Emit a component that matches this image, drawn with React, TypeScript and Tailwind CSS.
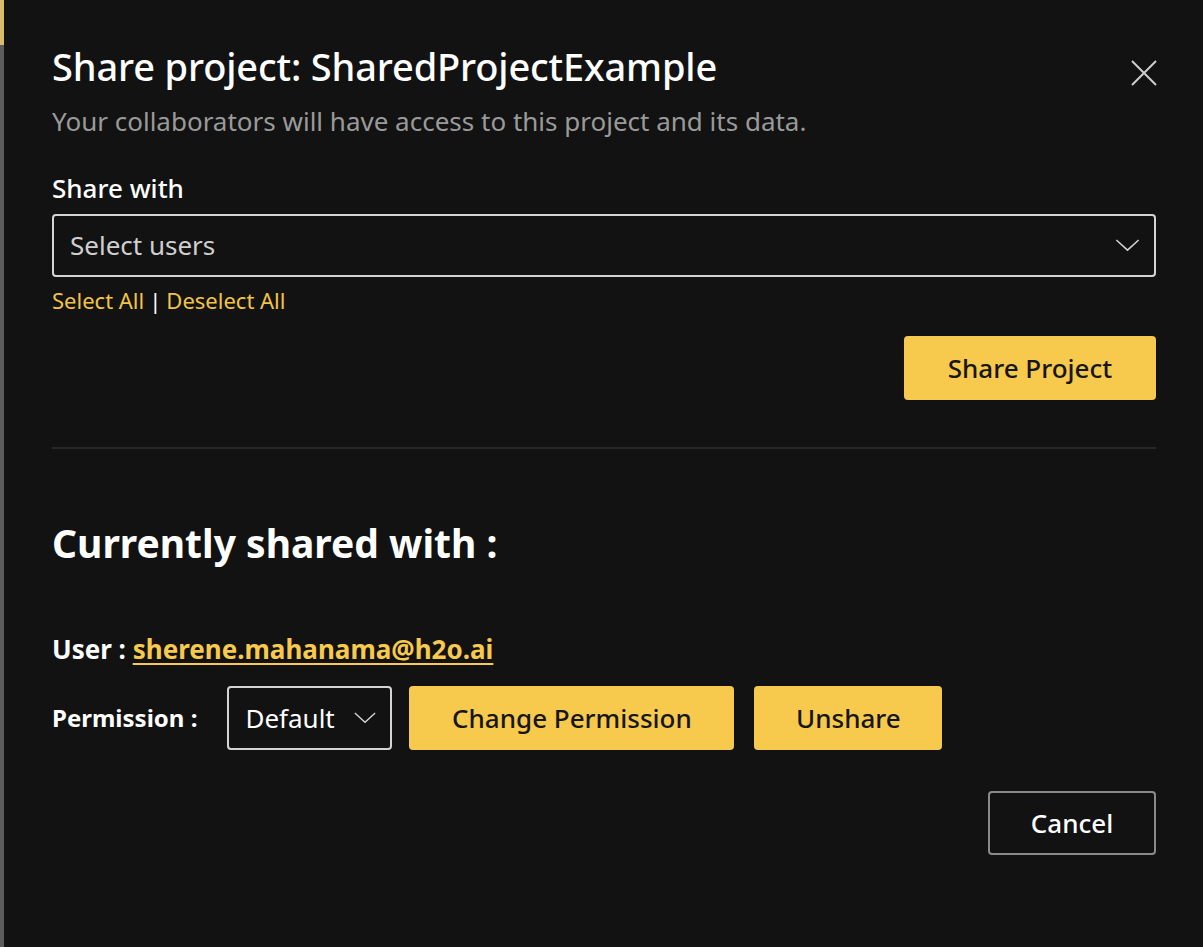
import React from 'react';

const Chevron = ({ className = '' }: { className?: string }) => (
    <svg viewBox="0 0 26 14" className={className} fill="none" stroke="currentColor" strokeWidth={1.6}>
        <path d="M1 1 L13 12 L25 1" />
    </svg>
);

export default function App() {
    return (
        <div className="min-h-[947px] w-full bg-[#121212] flex" style={{ fontFamily: '"Noto Sans", "Open Sans", sans-serif' }}>
            {/* left strip of the page behind */}
            <div className="w-[4px] flex flex-col bg-[#5c5c5c]">
                <div className="h-[45px] bg-[#d9bb6c]" />
            </div>

            <div className="flex-1 pl-[48px] pr-[47px] pt-[42px]">
                {/* header */}
                <div className="flex items-start justify-between">
                    <h1 className="text-[38px] leading-[48px] text-white font-medium tracking-[-0.15px]">
                        Share project: SharedProjectExample
                    </h1>
                    <button className="mt-[18px] mr-[-1px] text-[#cfcfcf]">
                        <svg viewBox="0 0 26 26" className="w-[26px] h-[26px]" stroke="currentColor" strokeWidth={2}>
                            <path d="M1 1 L25 25 M25 1 L1 25" />
                        </svg>
                    </button>
                </div>
                <p className="text-[26px] leading-[36px] text-[#9a9a9a] mt-[13px]">
                    Your collaborators will have access to this project and its data.
                </p>

                {/* share with */}
                <div className="mt-[31px] text-[26px] leading-[36px] text-white font-medium">Share with</div>
                <div className="mt-[8px] h-[63px] border-2 border-[#d4d4d4] rounded-[4px] flex items-center justify-between pl-[16px] pr-[14px]">
                    <span className="text-[26px] text-[#cfcfcf]">Select users</span>
                    <Chevron className="w-[25px] h-[13px] text-[#d4d4d4]" />
                </div>
                <div className="mt-[8px] text-[22px] leading-[30px] text-[#f2c443] flex">
                    <span>Select All</span>
                    <span className="text-white mx-[5px]">|</span>
                    <span>Deselect All</span>
                </div>

                <div className="flex justify-end mt-[21px]">
                    <button className="h-[64px] w-[252px] bg-[#f7c94c] rounded-[4px] text-[26px] font-medium text-[#161616]">
                        Share Project
                    </button>
                </div>

                <div className="mt-[47px] h-[2px] bg-[#272727]" />

                {/* currently shared */}
                <h2 className="mt-[68px] text-[39px] leading-[52px] font-bold text-white">Currently shared with :</h2>

                <div className="mt-[62px] text-[26px] leading-[36px] font-bold text-white">
                    User : <span className="text-[#f7c94c] underline underline-offset-[4px] decoration-2">sherene.mahanama@h2o.ai</span>
                </div>

                <div className="mt-[19px] flex items-center">
                    <span className="text-[24px] font-bold text-white">Permission :</span>
                    <div className="ml-[30px] h-[64px] w-[165px] border-2 border-[#d4d4d4] rounded-[4px] flex items-center justify-between pl-[16px] pr-[14px]">
                        <span className="text-[26px] text-white">Default</span>
                        <Chevron className="w-[22px] h-[12px] text-[#d4d4d4]" />
                    </div>
                    <button className="ml-[17px] h-[64px] w-[325px] bg-[#f7c94c] rounded-[4px] text-[26px] font-medium text-[#161616]">
                        Change Permission
                    </button>
                    <button className="ml-[20px] h-[64px] w-[188px] bg-[#f7c94c] rounded-[4px] text-[26px] font-medium text-[#161616]">
                        Unshare
                    </button>
                </div>

                <div className="flex justify-end mt-[41px]">
                    <button className="h-[64px] w-[168px] border-2 border-[#8a8a8a] rounded-[4px] text-[26px] font-medium text-white">
                        Cancel
                    </button>
                </div>
            </div>
        </div>
    );
}
